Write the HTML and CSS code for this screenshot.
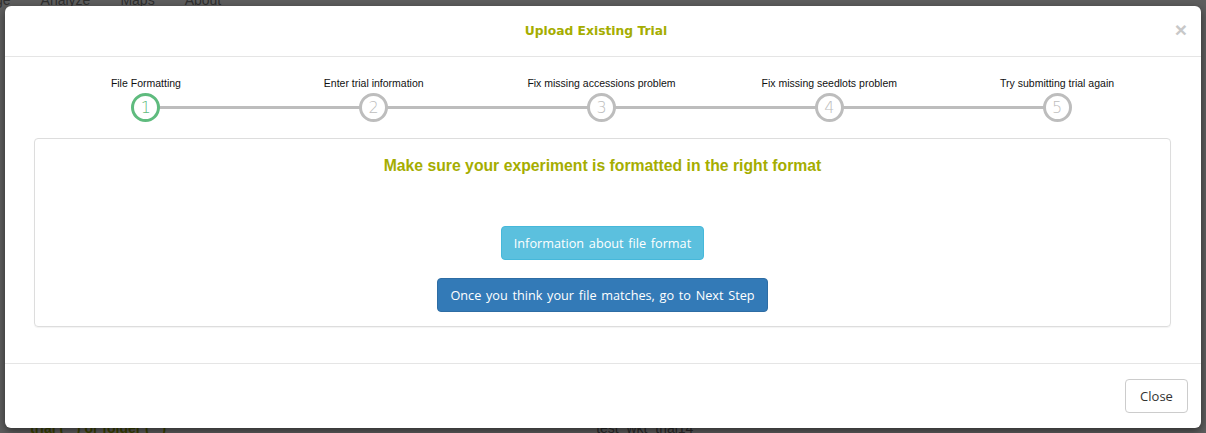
FILE: index.html
```html
<!DOCTYPE html>
<html>
<head>
<meta charset="utf-8">
<link rel="stylesheet" href="styles.css">
</head>
<body>
<div class="under">
  <div class="under-nav"><span>ge</span><span>Analyze</span><span>Maps</span><span>About</span></div>
  <div class="under-bottom"><span class="ub-green">trial ( &nbsp; ) or folder ( &nbsp; )</span><span class="ub-link">test_wkt_trial14</span></div>
</div>
<div class="modal">
  <div class="modal-header">
    <h4 class="modal-title">Upload Existing Trial</h4>
    <span class="close">&times;</span>
  </div>
  <div class="modal-body">
    <div class="steps">
      <div class="step active"><div class="step-label">File Formatting</div><div class="step-dot">1</div></div>
      <div class="step"><div class="step-label">Enter trial information</div><div class="step-dot">2</div></div>
      <div class="step"><div class="step-label">Fix missing accessions problem</div><div class="step-dot">3</div></div>
      <div class="step"><div class="step-label">Fix missing seedlots problem</div><div class="step-dot">4</div></div>
      <div class="step"><div class="step-label">Try submitting trial again</div><div class="step-dot">5</div></div>
    </div>
    <div class="panel">
      <h3 class="panel-title">Make sure your experiment is formatted in the right format</h3>
      <button class="btn btn-info">Information about file format</button>
      <button class="btn btn-primary">Once you think your file matches, go to Next Step</button>
    </div>
  </div>
  <div class="modal-footer">
    <button class="btn btn-default">Close</button>
  </div>
</div>
</body>
</html>
```
FILE: styles.css
```css
html, body {
  margin: 0;
  padding: 0;
}
body {
  width: 1206px;
  height: 433px;
  overflow: hidden;
  background: #5e5e5e;
  font-family: "Liberation Sans", Arial, sans-serif;
  position: relative;
}
.under {
  color: #2f2f2f;
  font-size: 14px;
}
.under-nav {
  display: flex;
  gap: 30px;
  margin-top: -8px;
  margin-left: -5px;
}
.under-bottom {
  position: absolute;
  left: 30px;
  top: 420px;
  width: 1176px;
  display: flex;
  font-size: 14px;
}
.ub-green { color: #3b4200; font-weight: bold; }
.ub-link { margin-left: 430px; color: #2a2a2a; }

.modal {
  position: absolute;
  top: 6px;
  left: 5px;
  width: 1196px;
  height: 422px;
  background: #fff;
  border-radius: 6px;
  box-shadow: 0 3px 9px rgba(0,0,0,.5);
  display: flex;
  flex-direction: column;
}
.modal-header {
  height: 50px;
  border-bottom: 1px solid #e5e5e5;
  display: flex;
  align-items: center;
  justify-content: center;
  padding-right: 14px;
  position: relative;
}
.modal-title {
  margin: 0;
  font-weight: bold;
  color: #a5ad00;
  font-family: "DejaVu Sans", sans-serif;
  font-size: 12.3px;
}
.close {
  position: absolute;
  right: 14px;
  top: 13px;
  font-size: 21px;
  font-weight: bold;
  color: #c8c8c8;
  line-height: 1;
}
.modal-body {
  flex: 1;
  padding: 0 30px 0 27px;
}
.steps {
  display: flex;
  margin-top: 20px;
  position: relative;
}
.steps::before {
  content: "";
  position: absolute;
  left: 114px;
  right: 114px;
  top: 29px;
  height: 3px;
  background: #bdbdbd;
}
.step {
  flex: 1;
  display: flex;
  flex-direction: column;
  align-items: center;
  position: relative;
}
.step-label {
  font-size: 10.5px;
  color: #111;
  line-height: 13px;
}
.step-dot {
  margin-top: 3px;
  width: 23px;
  height: 23px;
  border: 3.5px solid #bdbdbd;
  border-radius: 50%;
  background: #fff;
  color: #bdbdbd;
  font-size: 16px;
  line-height: 23px;
  text-align: center;
  font-family: "DejaVu Sans", sans-serif;
  font-weight: 300;
}
.step.active .step-dot {
  border-color: #5fbb7e;
  color: #5fbb7e;
}
.panel {
  margin: 16px 0 0 2px;
  height: 187px;
  border: 1px solid #ddd;
  border-radius: 4px;
  display: flex;
  flex-direction: column;
  align-items: center;
  box-shadow: 0 1px 1px rgba(0,0,0,.05);
}
.panel-title {
  margin: 18px 0 0;
  font-size: 15.75px;
  font-weight: bold;
  color: #a5ad00;
  font-family: "Liberation Sans", Arial, sans-serif;
}
.btn {
  font-family: "Open Sans", sans-serif;
  font-size: 12.7px;
  word-spacing: 1.4px;
  padding: 0 12px;
  height: 34px;
  border-radius: 4px;
  border: 1px solid transparent;
  line-height: 32px;
}
.btn-info {
  margin-top: 51px;
  background: #5bc0de;
  border-color: #46b8da;
  color: #fff;
}
.btn-primary {
  margin-top: 18px;
  background: #337ab7;
  border-color: #2e6da4;
  color: #fff;
}
.modal-footer {
  border-top: 1px solid #e5e5e5;
  padding: 15px 13px 15px 15px;
  display: flex;
  justify-content: flex-end;
}
.btn-default {
  background: #fff;
  border-color: #ccc;
  color: #333;
  width: 63px;
  word-spacing: 0;
  font-size: 13px;
}
```
